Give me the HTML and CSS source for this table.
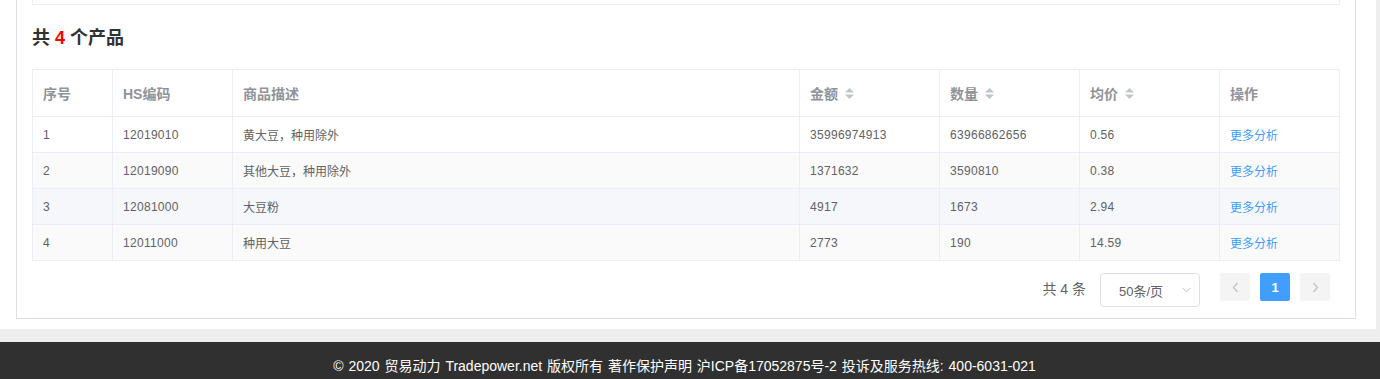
FILE: index.html
```html
<!DOCTYPE html>
<html lang="zh-CN">
<head>
<meta charset="utf-8">
<title>产品</title>
<link rel="stylesheet" href="styles.css">
</head>
<body>
<div class="page">
  <div class="box">
    <div class="prev-card"></div>
    <h2 class="title">共 <span class="count">4</span> 个产品</h2>
    <table class="grid">
      <colgroup>
        <col class="c-idx"><col class="c-hs"><col class="c-desc"><col class="c-num"><col class="c-num"><col class="c-num"><col class="c-op">
      </colgroup>
      <thead>
        <tr>
          <th>序号</th>
          <th>HS编码</th>
          <th>商品描述</th>
          <th><span class="sortable">金额<svg class="caret" width="9" height="13" viewBox="0 0 9 13"><path d="M0 5.5 L4.5 1 L9 5.5 Z"/><path d="M0 7.5 L9 7.5 L4.5 12 Z"/></svg></span></th>
          <th><span class="sortable">数量<svg class="caret" width="9" height="13" viewBox="0 0 9 13"><path d="M0 5.5 L4.5 1 L9 5.5 Z"/><path d="M0 7.5 L9 7.5 L4.5 12 Z"/></svg></span></th>
          <th><span class="sortable">均价<svg class="caret" width="9" height="13" viewBox="0 0 9 13"><path d="M0 5.5 L4.5 1 L9 5.5 Z"/><path d="M0 7.5 L9 7.5 L4.5 12 Z"/></svg></span></th>
          <th>操作</th>
        </tr>
      </thead>
      <tbody>
        <tr>
          <td>1</td><td class="num">12019010</td><td>黄大豆，种用除外</td><td class="num">35996974913</td><td class="num">63966862656</td><td class="num">0.56</td><td><a class="link" href="#">更多分析</a></td>
        </tr>
        <tr class="striped">
          <td>2</td><td class="num">12019090</td><td>其他大豆，种用除外</td><td class="num">1371632</td><td class="num">3590810</td><td class="num">0.38</td><td><a class="link" href="#">更多分析</a></td>
        </tr>
        <tr class="hover">
          <td>3</td><td class="num">12081000</td><td>大豆粉</td><td class="num">4917</td><td class="num">1673</td><td class="num">2.94</td><td><a class="link" href="#">更多分析</a></td>
        </tr>
        <tr class="striped">
          <td>4</td><td class="num">12011000</td><td>种用大豆</td><td class="num">2773</td><td class="num">190</td><td class="num">14.59</td><td><a class="link" href="#">更多分析</a></td>
        </tr>
      </tbody>
    </table>
    <div class="pager">
      <span class="total">共 4 条</span>
      <div class="select">
        <span>50条/页</span>
        <svg class="select-arrow" width="9" height="6" viewBox="0 0 9 6"><path d="M0.5 0.8 L4.5 4.8 L8.5 0.8" fill="none" stroke="#c0c4cc" stroke-width="1"/></svg>
      </div>
      <button class="pbtn nav" type="button"><svg width="7" height="11" viewBox="0 0 7 11"><path d="M5.5 1 L1.5 5.5 L5.5 10" fill="none" stroke="#c0c4cc" stroke-width="1.4"/></svg></button>
      <button class="pbtn active" type="button">1</button>
      <button class="pbtn nav" type="button"><svg width="7" height="11" viewBox="0 0 7 11"><path d="M1.5 1 L5.5 5.5 L1.5 10" fill="none" stroke="#c0c4cc" stroke-width="1.4"/></svg></button>
    </div>
  </div>
</div>
<footer class="footer">© 2020 贸易动力 Tradepower.net 版权所有 著作保护声明 沪ICP备17052875号-2 投诉及服务热线: 400-6031-021</footer>
</body>
</html>
```
FILE: styles.css
```css
* { box-sizing: border-box; }
html, body { margin: 0; padding: 0; }
body {
  background: #eeeeee;
  font-family: "Liberation Sans", Arial, "Noto Sans CJK SC", sans-serif;
  color: #606266;
}
.page {
  background: #fff;
  margin-right: 4px;
  padding: 0 20px 10px 16px;
  margin-bottom: 13px;
}
.box {
  border: 1px solid #dcdfe6;
  border-top: none;
  padding: 0 15px 11px;
}
.prev-card {
  height: 5px;
  border: 1px solid #ebeef5;
  border-top: none;
}
.title {
  margin: 21px 0 19px;
  font-size: 18px;
  line-height: 24px;
  font-weight: bold;
  color: #303133;
}
.count { color: #ff0000; }
.grid {
  width: 100%;
  table-layout: fixed;
  border-collapse: separate;
  border-spacing: 0;
  border-top: 1px solid #ebeef5;
  border-left: 1px solid #ebeef5;
}
.c-idx { width: 80px; }
.c-hs { width: 120px; }
.c-desc { width: 567px; }
.c-num { width: 140px; }
.c-op { width: 120px; }
.grid th, .grid td {
  border-right: 1px solid #ebeef5;
  border-bottom: 1px solid #ebeef5;
  padding: 0 10px;
  text-align: left;
  white-space: nowrap;
}
.grid th {
  height: 47px;
  font-size: 14px;
  font-weight: bold;
  color: #909399;
}
.grid td {
  height: 36px;
  font-size: 12px;
  color: #606266;
}
.grid td.num { letter-spacing: 0.3px; }
.striped td { background: #fafafa; }
.hover td { background: #f5f7fa; }
.sortable {
  display: inline-flex;
  align-items: center;
  gap: 7px;
}
.caret { fill: #c0c4cc; }
.link {
  color: #409eff;
  text-decoration: none;
}
.pager {
  display: flex;
  justify-content: flex-end;
  align-items: flex-start;
  margin-top: 12px;
  padding-right: 10px;
}
.total {
  font-size: 14px;
  line-height: 32px;
  color: #606266;
  margin-right: 14px;
}
.select {
  width: 100px;
  height: 34px;
  border: 1px solid #dcdfe6;
  border-radius: 4px;
  display: flex;
  align-items: center;
  justify-content: space-between;
  padding: 0 8px 0 18px;
  font-size: 13px;
  color: #606266;
  margin-right: 20px;
}
.select-arrow { display: block; }
.pbtn {
  width: 30px;
  height: 28px;
  border: none;
  border-radius: 2px;
  margin-left: 10px;
  display: flex;
  align-items: center;
  justify-content: center;
  font-family: inherit;
  font-size: 13px;
  font-weight: bold;
  padding: 0;
}
.pbtn:first-of-type { margin-left: 0; }
.nav { background: #f4f4f5; }
.active { background: #409eff; color: #fff; }
.footer {
  background: #303030;
  color: #ffffff;
  font-size: 14px;
  line-height: 20px;
  padding: 14px 11px 16px 0;
  text-align: center;
  word-spacing: 1px;
}
```
